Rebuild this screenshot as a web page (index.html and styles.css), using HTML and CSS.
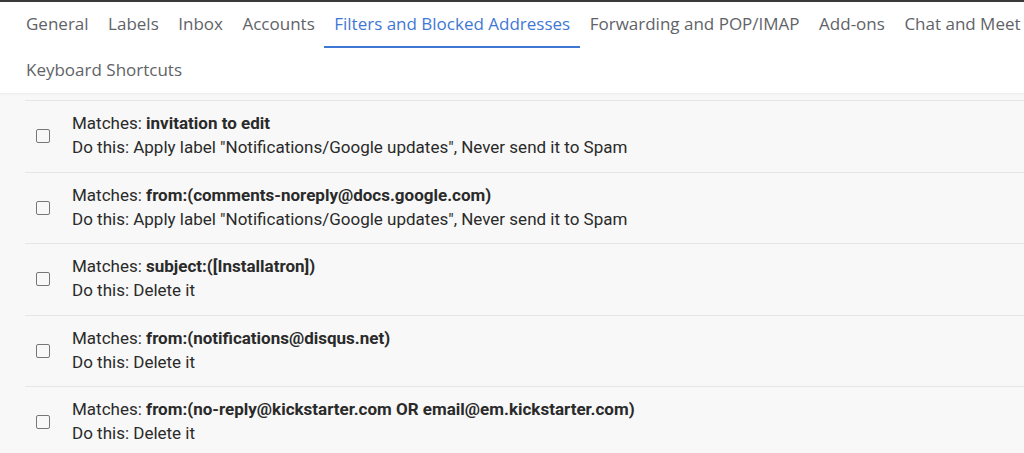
FILE: index.html
```
<!DOCTYPE html>
<html lang="en">
<head>
  <meta charset="UTF-8" />
  <meta name="viewport" content="width=device-width, initial-scale=1" />
  <title>Settings - Filters and Blocked Addresses</title>
  <link rel="stylesheet" href="styles.css">
</head>
<body>
  <div class="settings-header">
    <nav class="tabs" aria-label="Settings">
      <a class="tab">General</a>
      <a class="tab">Labels</a>
      <a class="tab">Inbox</a>
      <a class="tab">Accounts</a>
      <a class="tab active">Filters and Blocked Addresses</a>
      <a class="tab">Forwarding and POP/IMAP</a>
      <a class="tab">Add-ons</a>
      <a class="tab">Chat and Meet</a>
      <a class="tab">Keyboard Shortcuts</a>
    </nav>
  </div>

  <div class="filter-list">
    <div class="filter-row">
      <span class="checkbox"></span>
      <div class="filter-text">
        <div>Matches: <b>invitation to edit</b></div>
        <div>Do this: Apply label "Notifications/Google updates", Never send it to Spam</div>
      </div>
    </div>
    <div class="filter-row">
      <span class="checkbox"></span>
      <div class="filter-text">
        <div>Matches: <b>from:(comments-noreply@docs.google.com)</b></div>
        <div>Do this: Apply label "Notifications/Google updates", Never send it to Spam</div>
      </div>
    </div>
    <div class="filter-row">
      <span class="checkbox"></span>
      <div class="filter-text">
        <div>Matches: <b>subject:([Installatron])</b></div>
        <div>Do this: Delete it</div>
      </div>
    </div>
    <div class="filter-row">
      <span class="checkbox"></span>
      <div class="filter-text">
        <div>Matches: <b>from:(notifications@disqus.net)</b></div>
        <div>Do this: Delete it</div>
      </div>
    </div>
    <div class="filter-row">
      <span class="checkbox"></span>
      <div class="filter-text">
        <div>Matches: <b>from:(no-reply@kickstarter.com OR email@em.kickstarter.com)</b></div>
        <div>Do this: Delete it</div>
      </div>
    </div>
  </div>
</body>
</html>
```

FILE: styles.css
```
body {
  margin: 0;
  font-family: Roboto, 'Liberation Sans', sans-serif;
  background-color: #f8f8f8;
  color: #202124;
  border-top: 2px solid #3a3a3a;
  overflow: hidden;
}
.settings-header {
  background: #fff;
  height: 91px;
  box-shadow: 0 1px 2px rgba(0, 0, 0, 0.06);
}
.tabs {
  display: flex;
  flex-wrap: wrap;
  column-gap: 19.5px;
  padding-left: 26px;
  white-space: nowrap;
}
.tab {
  font-family: 'Open Sans', Roboto, sans-serif;
  font-size: 17px;
  color: #5f6368;
  height: 44px;
  line-height: 43px;
  border-bottom: 2px solid transparent;
}
.tab.active {
  color: #3f78d4;
  border-bottom-color: #3f78d4;
  padding: 0 10px;
  margin: 0 -10px;
}
.filter-list {
  padding-top: 7px;
}
.filter-row {
  display: flex;
  align-items: center;
  height: 70.5px;
  margin-left: 25px;
  border-top: 1px solid #e6e6e6;
}
.checkbox {
  width: 12px;
  height: 12px;
  border: 1.5px solid #777;
  border-radius: 2px;
  margin-left: 11px;
  margin-right: 22px;
  flex: none;
}
.filter-text {
  font-size: 17px;
  line-height: 24px;
  color: #2a2a2a;
  margin-top: -2px;
}
.filter-text b {
  font-weight: 700;
}
```
